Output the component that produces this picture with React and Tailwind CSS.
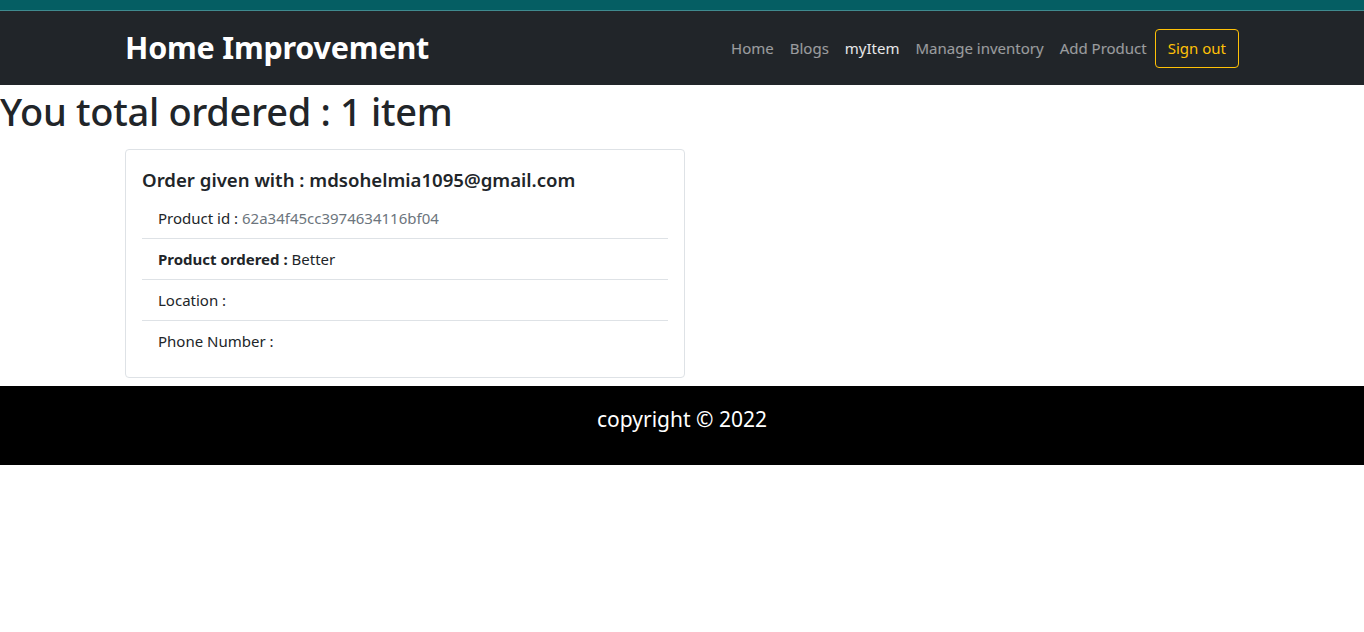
import React from "react";

const links = ["Home", "Blogs", "myItem", "Manage inventory", "Add Product"];

const Header = () => (
  <div>
    <div className="h-[10px] bg-[#055e63]" />
    <div className="h-[1px] bg-[#3f8a8e]" />
    <nav className="h-[74px] bg-[#212529]">
      <div className="mx-auto flex h-full w-[1138px] items-center justify-between px-3">
        <div className="text-[30.5px] font-bold text-white tracking-[-0.2px]">Home Improvement</div>
        <div className="flex items-center">
          {links.map((l) => (
            <a
              key={l}
              className={`px-2 text-[15px] ${l === "myItem" ? "text-white/90" : "text-white/55"}`}
            >
              {l}
            </a>
          ))}
          <button className="h-[39px] rounded-[4px] border border-[#ffc107] px-3 text-[15px] text-[#ffc107]">
            Sign out
          </button>
        </div>
      </div>
    </nav>
  </div>
);

const Row = ({ children, last }) => (
  <div className={`px-4 py-[8px] leading-[24px] ${last ? "" : "border-b border-[#dee2e6]"}`}>{children}</div>
);

const OrderCard = () => (
  <div className="w-[560px] rounded-[4px] border border-[#dee2e6] px-4 pt-[18px] pb-[16px]">
    <h5 className="mb-[6px] text-[18.6px] font-semibold leading-[24px] text-[#212529]">
      Order given with : mdsohelmia1095@gmail.com
    </h5>
    <div className="text-[15px] text-[#212529]">
      <Row>
        Product id : <span className="text-[#6c757d]">62a34f45cc3974634116bf04</span>
      </Row>
      <Row>
        <b>Product ordered :</b> Better
      </Row>
      <Row>Location :</Row>
      <Row last>Phone Number :</Row>
    </div>
  </div>
);

export default function App() {
  return (
    <div className="min-h-[632px] bg-white font-['Noto_Sans','Open_Sans',sans-serif] text-[#212529]">
      <Header />
      <h1 className="mt-[1px] mb-[13px] text-[38px] font-medium leading-[50px] tracking-[-0.3px]">
        You total ordered : 1 item
      </h1>
      <div className="mx-auto w-[1138px] px-3 pb-2">
        <OrderCard />
      </div>
      <footer className="flex h-[79px] items-center justify-center bg-black pb-[12px]">
        <span className="text-[21px] text-white">copyright © 2022</span>
      </footer>
    </div>
  );
}
